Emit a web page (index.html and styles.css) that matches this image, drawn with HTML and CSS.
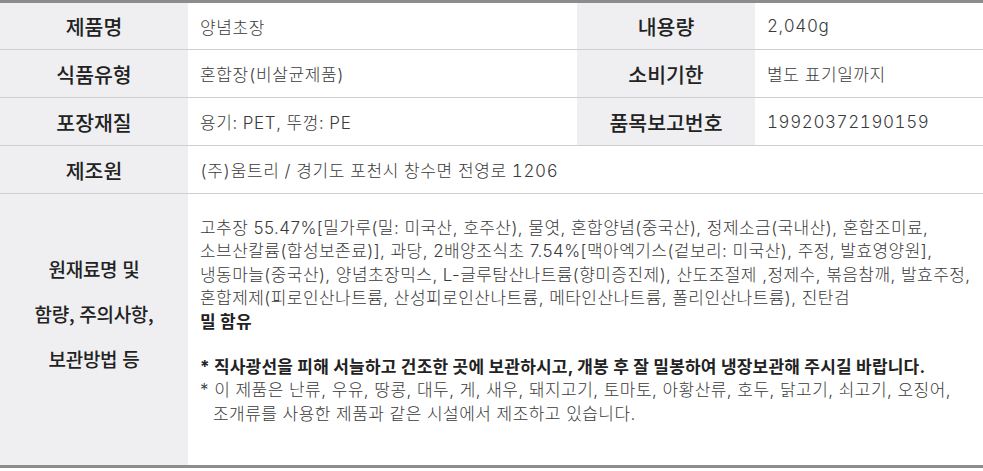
FILE: index.html
```html
<!DOCTYPE html>
<html lang="ko">
<head>
<meta charset="utf-8">
<title>상품정보</title>
<link rel="stylesheet" href="styles.css">
</head>
<body>
<div class="info">
  <div class="row">
    <div class="th">제품명</div>
    <div class="td">양념초장</div>
    <div class="th">내용량</div>
    <div class="td">2,040g</div>
  </div>
  <div class="row">
    <div class="th">식품유형</div>
    <div class="td">혼합장(비살균제품)</div>
    <div class="th">소비기한</div>
    <div class="td">별도 표기일까지</div>
  </div>
  <div class="row">
    <div class="th">포장재질</div>
    <div class="td">용기: PET, 뚜껑: PE</div>
    <div class="th">품목보고번호</div>
    <div class="td">19920372190159</div>
  </div>
  <div class="row">
    <div class="th">제조원</div>
    <div class="td wide">(주)움트리 / 경기도 포천시 창수면 전영로 1206</div>
  </div>
  <div class="row last">
    <div class="th multi">
      <span>원재료명 및</span>
      <span>함량, 주의사항,</span>
      <span>보관방법 등</span>
    </div>
    <div class="td wide body">
      <p>고추장 55.47%[밀가루(밀: 미국산, 호주산), 물엿, 혼합양념(중국산), 정제소금(국내산), 혼합조미료,<br>소브산칼륨(합성보존료)], 과당, 2배양조식초 7.54%[맥아엑기스(겉보리: 미국산), 주정, 발효영양원],<br>냉동마늘(중국산), 양념초장믹스, L-글루탐산나트륨(향미증진제), 산도조절제 ,정제수, 볶음참깨, 발효주정,<br>혼합제제(피로인산나트륨, 산성피로인산나트륨, 메타인산나트륨, 폴리인산나트륨), 진탄검</p>
      <p class="strong">밀 함유</p>
      <p class="strong notice">* 직사광선을 피해 서늘하고 건조한 곳에 보관하시고, 개봉 후 잘 밀봉하여 냉장보관해 주시길 바랍니다.</p>
      <p class="note">* 이 제품은 난류, 우유, 땅콩, 대두, 게, 새우, 돼지고기, 토마토, 아황산류, 호두, 닭고기, 쇠고기, 오징어,<br>조개류를 사용한 제품과 같은 시설에서 제조하고 있습니다.</p>
    </div>
  </div>
</div>
</body>
</html>
```

FILE: styles.css
```css
html, body {
  margin: 0;
  padding: 0;
  background: #ffffff;
}

body {
  font-family: Inter, "Noto Sans CJK KR", sans-serif;
  color: #333333;
}

.info {
  border-top: 3px solid #8c8c8c;
  border-bottom: 3px solid #8c8c8c;
}

.row {
  display: grid;
  grid-template-columns: 188px 389px 178px 1fr;
  border-bottom: 1px solid #cfcfcf;
  min-height: 47px;
}

.row:first-child {
  min-height: 46px;
}

.row.last {
  border-bottom: none;
}

.th {
  background: #efeff1;
  display: flex;
  align-items: center;
  justify-content: center;
  font-family: "Noto Sans CJK KR", sans-serif;
  font-size: 20.5px;
  font-weight: 500;
  color: #222222;
  letter-spacing: 0;
}

.td {
  display: flex;
  align-items: center;
  padding: 0 12px;
  font-size: 17px;
  font-weight: 300;
  color: #3a3a3a;
  letter-spacing: 0.6px;
  font-variant-numeric: tabular-nums;
}

.td.wide {
  grid-column: 2 / 5;
}

.th.multi {
  flex-direction: column;
  padding-bottom: 33px;
  font-size: 19px;
  letter-spacing: -0.3px;
}

.th.multi span {
  display: block;
  line-height: 45px;
}

.td.body {
  display: block;
  padding: 23px 12px 39px;
  font-size: 17px;
  line-height: 23.4px;
  letter-spacing: 0.45px;
  font-variant-numeric: normal;
  white-space: nowrap;
}

.td.body p {
  margin: 0;
}

.td.body .strong {
  font-weight: 700;
  color: #222222;
  letter-spacing: 0.2px;
}

.td.body .notice {
  margin-top: 22px;
}

.td.body .note {
  padding-left: 13px;
  text-indent: -13px;
}
```
